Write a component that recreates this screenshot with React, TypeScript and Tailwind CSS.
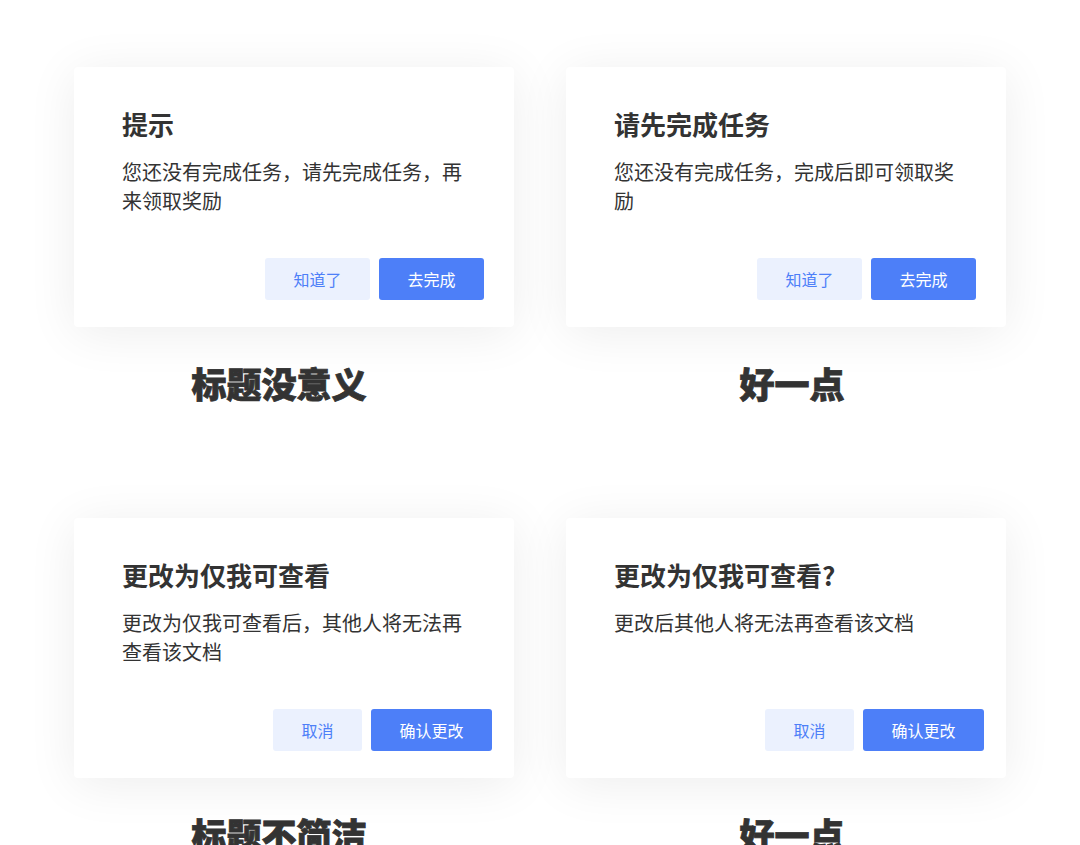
import React from "react";

const font = { fontFamily: '"Noto Sans CJK SC", "Noto Sans", sans-serif' };

type CardProps = {
  title: string;
  body: string;
  secondary: string;
  primary: string;
  secW: string;
  priW: string;
  pr: string;
  label: string;
  labelPad: string;
};

function Card(p: CardProps) {
  return (
    <div className="flex flex-col">
      <div className="flex h-[260px] w-[440px] flex-col rounded-[4px] bg-white shadow-[0_6px_50px_rgba(0,0,0,0.075)]">
        <div className="pl-[48px] pr-[44px] pt-[41px]">
          <div className="text-[26px] font-bold leading-[32px] text-[#333333]">{p.title}</div>
          <div className="mt-[17px] text-[20px] leading-[29px] text-[#333333]">{p.body}</div>
        </div>
        <div className={`mt-auto flex justify-end gap-[9px] pb-[27px] ${p.pr}`}>
          <button className={`flex h-[42px] items-center justify-center rounded-[3px] bg-[#ebf1fe] text-[16px] text-[#4d7ff8] ${p.secW}`}>
            {p.secondary}
          </button>
          <button className={`flex h-[42px] items-center justify-center rounded-[3px] bg-[#4d7ff8] text-[16px] text-white ${p.priW}`}>
            {p.primary}
          </button>
        </div>
      </div>
      <div className={`mt-[35px] text-center text-[35px] font-black leading-[42px] text-[#333333] [-webkit-text-stroke:0.8px_#333333] ${p.labelPad}`}>
        {p.label}
      </div>
    </div>
  );
}

export default function App() {
  return (
    <div className="h-[845px] w-[1080px] overflow-hidden bg-white" style={font}>
      <div className="grid grid-cols-[440px_440px] gap-x-[52px] gap-y-[114px] pl-[74px] pt-[67px]">
        <Card
          title="提示"
          body="您还没有完成任务，请先完成任务，再来领取奖励"
          secondary="知道了"
          primary="去完成"
          secW="w-[105px]"
          priW="w-[105px]"
          pr="pr-[30px]"
          label="标题没意义"
          labelPad="pr-[30px]"
        />
        <Card
          title="请先完成任务"
          body="您还没有完成任务，完成后即可领取奖励"
          secondary="知道了"
          primary="去完成"
          secW="w-[105px]"
          priW="w-[105px]"
          pr="pr-[30px]"
          label="好一点"
          labelPad="pl-[12px]"
        />
        <Card
          title="更改为仅我可查看"
          body="更改为仅我可查看后，其他人将无法再查看该文档"
          secondary="取消"
          primary="确认更改"
          secW="w-[89px]"
          priW="w-[121px]"
          pr="pr-[22px]"
          label="标题不简洁"
          labelPad="pr-[30px]"
        />
        <Card
          title="更改为仅我可查看?"
          body="更改后其他人将无法再查看该文档"
          secondary="取消"
          primary="确认更改"
          secW="w-[89px]"
          priW="w-[121px]"
          pr="pr-[22px]"
          label="好一点"
          labelPad="pl-[12px]"
        />
      </div>
    </div>
  );
}
